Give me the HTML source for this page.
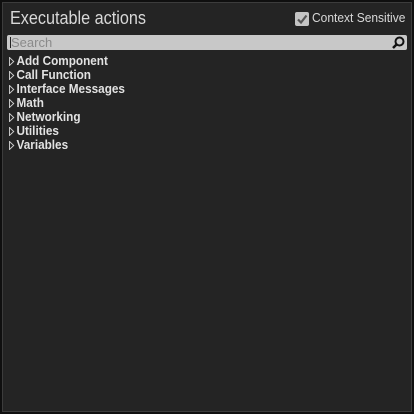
<!DOCTYPE html>
<html><head><style>
html,body{margin:0;padding:0;background:#0e0e0e;}
#w{position:absolute;left:0;top:0;width:414px;height:414px;background:#0f0f0f;}
#b{position:absolute;left:2px;top:2px;width:408px;height:408px;border:1px solid #3c3c3c;background:#242424;}
#t{position:absolute;left:10px;top:8px;font:18px "Liberation Sans",sans-serif;color:#d8d8d8;transform:scaleX(0.9);transform-origin:0 0;}
#cs{position:absolute;left:312px;top:11px;font:12.5px "Liberation Sans",sans-serif;color:#d8d8d8;transform:scaleX(0.96);transform-origin:0 0;}
#cb{position:absolute;left:295px;top:12px;width:14px;height:14px;background:#c4c4c4;border-radius:2px;}
#s{position:absolute;left:7px;top:35px;width:400px;height:15px;background:#c8c8c8;border-radius:2px;}
#s span{position:absolute;left:4px;top:0px;font:13px "Liberation Sans",sans-serif;color:#8a8a8a;line-height:15px;}
#s i{position:absolute;left:3px;top:2px;width:1px;height:11px;background:#222;}
.r{position:absolute;left:9px;font:bold 12.5px "Liberation Sans",sans-serif;color:#e2e2e2;line-height:14px;transform:scaleX(0.94);transform-origin:0 0;}
.r svg{position:absolute;left:0;top:3px;}
.r b{margin-left:8px;}
</style></head><body><div id="w"><div id="b"></div>
<div id="t">Executable actions</div>
<div id="cb"><svg width="14" height="14"><path d="M3 7.5 L6 10.5 L11.5 3.5" stroke="#555" stroke-width="2.2" fill="none"/></svg></div>
<div id="cs">Context Sensitive</div>
<div id="s"><i></i><span>Search</span><svg style="position:absolute;right:2px;top:1px" width="14" height="13"><circle cx="8.5" cy="5.5" r="4" stroke="#111" stroke-width="2" fill="none"/><path d="M5.5 8.5 L2 12" stroke="#111" stroke-width="2.5"/></svg></div>
<div class="r" style="top:54px"><svg width="6" height="9"><path d="M0.5 0.5 L5 4.5 L0.5 8.5Z" stroke="#ccc" fill="none"/></svg><b>Add Component</b></div>
<div class="r" style="top:68px"><svg width="6" height="9"><path d="M0.5 0.5 L5 4.5 L0.5 8.5Z" stroke="#ccc" fill="none"/></svg><b>Call Function</b></div>
<div class="r" style="top:82px"><svg width="6" height="9"><path d="M0.5 0.5 L5 4.5 L0.5 8.5Z" stroke="#ccc" fill="none"/></svg><b>Interface Messages</b></div>
<div class="r" style="top:96px"><svg width="6" height="9"><path d="M0.5 0.5 L5 4.5 L0.5 8.5Z" stroke="#ccc" fill="none"/></svg><b>Math</b></div>
<div class="r" style="top:110px"><svg width="6" height="9"><path d="M0.5 0.5 L5 4.5 L0.5 8.5Z" stroke="#ccc" fill="none"/></svg><b>Networking</b></div>
<div class="r" style="top:124px"><svg width="6" height="9"><path d="M0.5 0.5 L5 4.5 L0.5 8.5Z" stroke="#ccc" fill="none"/></svg><b>Utilities</b></div>
<div class="r" style="top:138px"><svg width="6" height="9"><path d="M0.5 0.5 L5 4.5 L0.5 8.5Z" stroke="#ccc" fill="none"/></svg><b>Variables</b></div>
</div></body></html>
